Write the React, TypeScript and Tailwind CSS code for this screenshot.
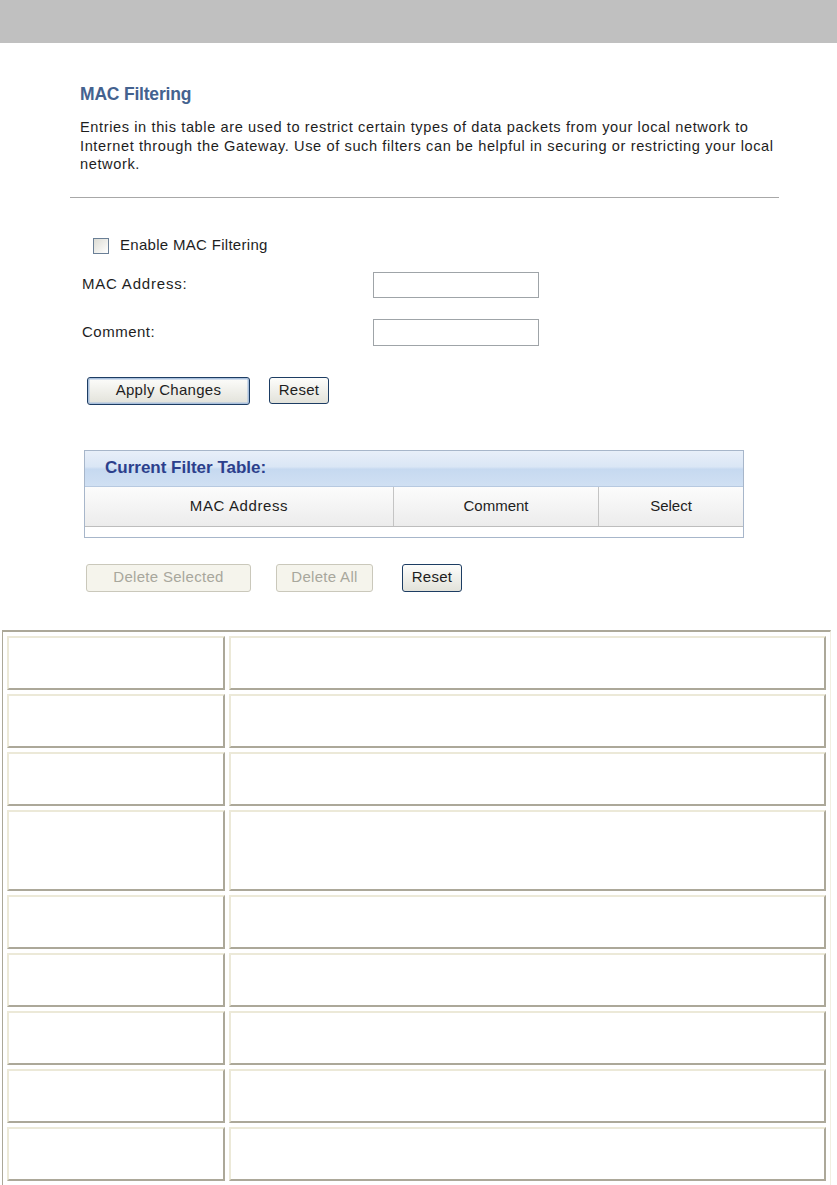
import React from "react";

const rows = [54, 54, 54, 81, 54, 54, 54, 54, 54];

export default function App() {
  return (
    <div className="w-[837px] h-[1185px] overflow-hidden bg-white text-[#1e1e1e] font-['Liberation_Sans',Arial,sans-serif]">
      <div className="h-[43px] bg-[#c0c0c0]" />

      <div className="pl-[80px]">
        <h1 className="mt-[41px] text-[17.5px] leading-[20px] font-bold text-[#44628f] tracking-[-0.2px]">MAC Filtering</h1>
        <p className="mt-[14px] text-[14.6px] leading-[18.5px] tracking-[0.6px] text-[#1e1e1e]">
          Entries in this table are used to restrict certain types of data packets from your local network to
          <br />
          Internet through the Gateway. Use of such filters can be helpful in securing or restricting your local
          <br />
          network.
        </p>
      </div>

      <div className="ml-[70px] mt-[23px] w-[709px] h-px bg-[#a8a8a8]" />

      <div className="pl-[80px] text-[15px] text-[#1e1e1e]">
        <div className="mt-[39px] flex items-center h-[18px]">
          <span className="ml-[13px] w-[16px] h-[16px] border border-[#6a7f96] bg-gradient-to-br from-[#dcdcd4] to-white" />
          <span className="ml-[11px] tracking-[0.3px]">Enable MAC Filtering</span>
        </div>

        <div className="mt-[17px] flex items-center h-[26px]">
          <span className="w-[293px] pl-[2px] tracking-[0.8px]">MAC Address:</span>
          <span className="w-[166px] h-[26px] border border-[#9fa4a8] bg-white" />
        </div>

        <div className="mt-[21px] flex items-center h-[27px]">
          <span className="w-[293px] pl-[2px] tracking-[0.5px]">Comment:</span>
          <span className="w-[166px] h-[27px] border border-[#9fa4a8] bg-white" />
        </div>

        <div className="mt-[31px] flex items-center gap-[19px] h-[28px]">
          <button className="ml-[7px] w-[163px] h-[28px] rounded-[3px] border border-[#1d3d63] bg-gradient-to-b from-[#fdfdfb] to-[#e2e2da] shadow-[inset_0_0_0_1.5px_#a9c0dd] text-[15px] tracking-[0.3px] text-[#1e1e1e]">
            Apply Changes
          </button>
          <button className="w-[60px] h-[27px] rounded-[3px] border border-[#1d3d63] bg-gradient-to-b from-[#fdfdfb] to-[#e2e2da] text-[15px] tracking-[0.3px] text-[#1e1e1e]">
            Reset
          </button>
        </div>
      </div>

      <div className="ml-[84px] mt-[45px] w-[660px] h-[88px] border border-[#a7b6ca] flex flex-col">
        <div className="h-[36px] flex items-center pl-[20px] bg-[linear-gradient(to_bottom,#e8eff9_0%,#dae6f5_45%,#c6d9f0_52%,#d0e0f3_100%)] border-b border-[#b7c9e0]">
          <span className="text-[17px] font-bold text-[#2c3f8c]">Current Filter Table:</span>
        </div>
        <div className="h-[40px] flex border-b border-[#bdbdbd] bg-gradient-to-b from-[#fcfcfc] to-[#ececec] text-[15px] text-[#1e1e1e]">
          <div className="w-[309px] flex items-center justify-center border-r border-[#c4c4c4] tracking-[0.6px]">MAC Address</div>
          <div className="w-[205px] flex items-center justify-center border-r border-[#c4c4c4]">Comment</div>
          <div className="flex-1 flex items-center justify-center">Select</div>
        </div>
        <div className="flex-1 bg-white" />
      </div>

      <div className="ml-[86px] mt-[26px] flex items-center h-[28px] text-[15px] tracking-[0.3px]">
        <button className="w-[165px] h-[28px] rounded-[3px] border border-[#cac8bb] bg-[#f5f4ec] text-[#a8a79c]">
          Delete Selected
        </button>
        <button className="ml-[25px] w-[97px] h-[28px] rounded-[3px] border border-[#cac8bb] bg-[#f5f4ec] text-[#a8a79c]">
          Delete All
        </button>
        <button className="ml-[29px] w-[60px] h-[28px] rounded-[3px] border border-[#1d3d63] bg-gradient-to-b from-[#fdfdfb] to-[#e2e2da] text-[#1e1e1e]">
          Reset
        </button>
      </div>

      <div className="ml-[2px] mt-[38px] w-[829px] border-t-2 border-l border-r border-b border-t-[#aca899] border-l-[#aca899] border-r-[#f1efe2] border-b-[#f1efe2] p-[4px] flex flex-col gap-[4px]">
        {rows.map((h, i) => (
          <div key={i} className="flex gap-[4px]" style={{ height: h }}>
            <div className="w-[218px] h-full border-2 border-t-[#ece9d8] border-l-[#ece9d8] border-r-[#aca899] border-b-[#aca899]" />
            <div className="w-[597px] h-full border-2 border-t-[#ece9d8] border-l-[#ece9d8] border-r-[#aca899] border-b-[#aca899]" />
          </div>
        ))}
      </div>
    </div>
  );
}
